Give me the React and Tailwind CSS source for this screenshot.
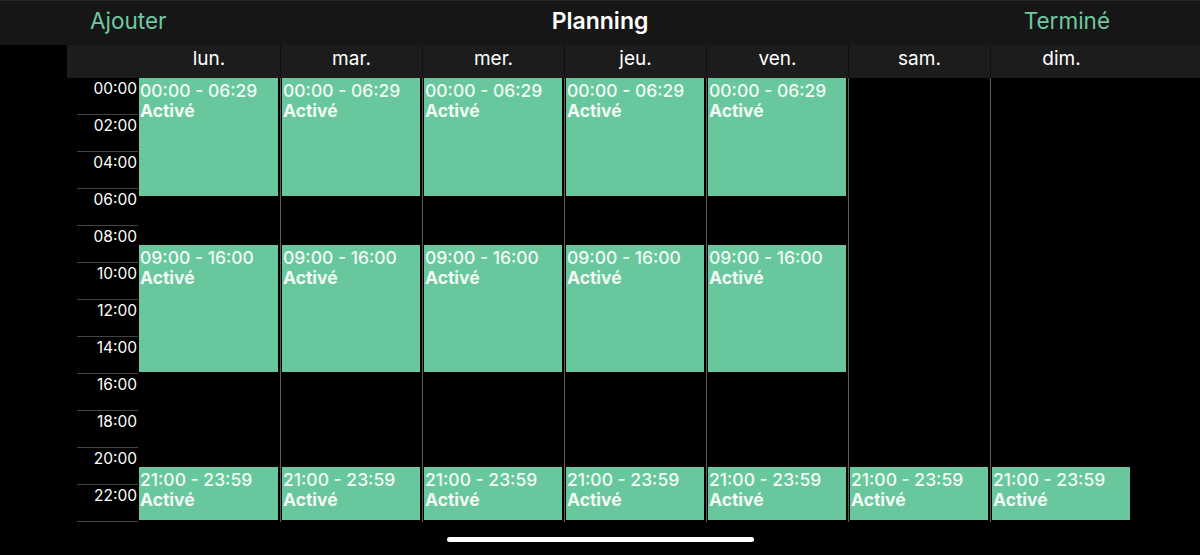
const DAYS = ['lun.', 'mar.', 'mer.', 'jeu.', 'ven.', 'sam.', 'dim.']
const HOUR = 18.5

const WEEKDAY = [
  { from: 0, to: 6 + 29 / 60, label: '00:00 - 06:29' },
  { from: 9, to: 16, label: '09:00 - 16:00' },
  { from: 21, to: 24, label: '21:00 - 23:59' },
]
const WEEKEND = [{ from: 21, to: 24, label: '21:00 - 23:59' }]

const font = { fontFamily: 'Inter, "Noto Sans", sans-serif' }

export default function App() {
  return (
    <div style={font} className="w-[1200px] h-[555px] bg-black overflow-hidden flex flex-col">
      <div className="h-[45px] bg-[#161616] grid grid-cols-[1fr_auto_1fr] items-center px-[90px] pb-[3px] border-t border-[#262626]">
        <span className="text-[22.5px] text-[#6fc9a0] leading-none">Ajouter</span>
        <span className="text-[23px] font-semibold text-white leading-none">Planning</span>
        <span className="text-[22.5px] text-[#6fc9a0] leading-none justify-self-end">Terminé</span>
      </div>

      <div className="pl-[67px]">
        <div className="grid grid-cols-[71px_repeat(7,142px)] h-[33px] bg-[#1c1c1c]">
          <div />
          {DAYS.map((d, i) => (
            <div
              key={d}
              className={`flex items-center justify-center text-[19px] text-white pb-[6px] ${i > 0 ? 'border-l border-[#101010]' : ''}`}
            >
              {d}
            </div>
          ))}
        </div>

        <div className="grid grid-cols-[71px_repeat(7,142px)] h-[444px]">
          <div className="flex flex-col">
            {Array.from({ length: 12 }).map((_, i) => (
              <div key={i} className="h-[37px] flex flex-col">
                <span className="flex-1 text-right pr-px pt-[2px] text-[15.5px] leading-[18px] text-white">
                  {String(i * 2).padStart(2, '0')}:00
                </span>
                <div className="ml-[10px] h-px bg-[#444444]" />
              </div>
            ))}
          </div>
          {DAYS.map((d, i) => (
            <DayColumn key={d} first={i === 0} blocks={i < 5 ? WEEKDAY : WEEKEND} />
          ))}
        </div>
      </div>

      <div className="mt-[15px] mx-auto w-[307px] h-[5px] rounded-full bg-white" />
    </div>
  )
}

function DayColumn({ first, blocks }) {
  return (
    <div className={`relative ${first ? '' : 'border-l border-[#5c5c5c]'}`}>
      {blocks.map(b => (
        <div
          key={b.label}
          className="absolute left-px right-[2px] bg-[#68c79c] pl-[1px] pt-[3px] text-[17.5px] leading-[20px] text-[#f2fbf6]"
          style={{ top: b.from * HOUR, height: (b.to - b.from) * HOUR - 2 }}
        >
          <div className="font-medium">{b.label}</div>
          <div className="font-bold">Activé</div>
        </div>
      ))}
    </div>
  )
}
